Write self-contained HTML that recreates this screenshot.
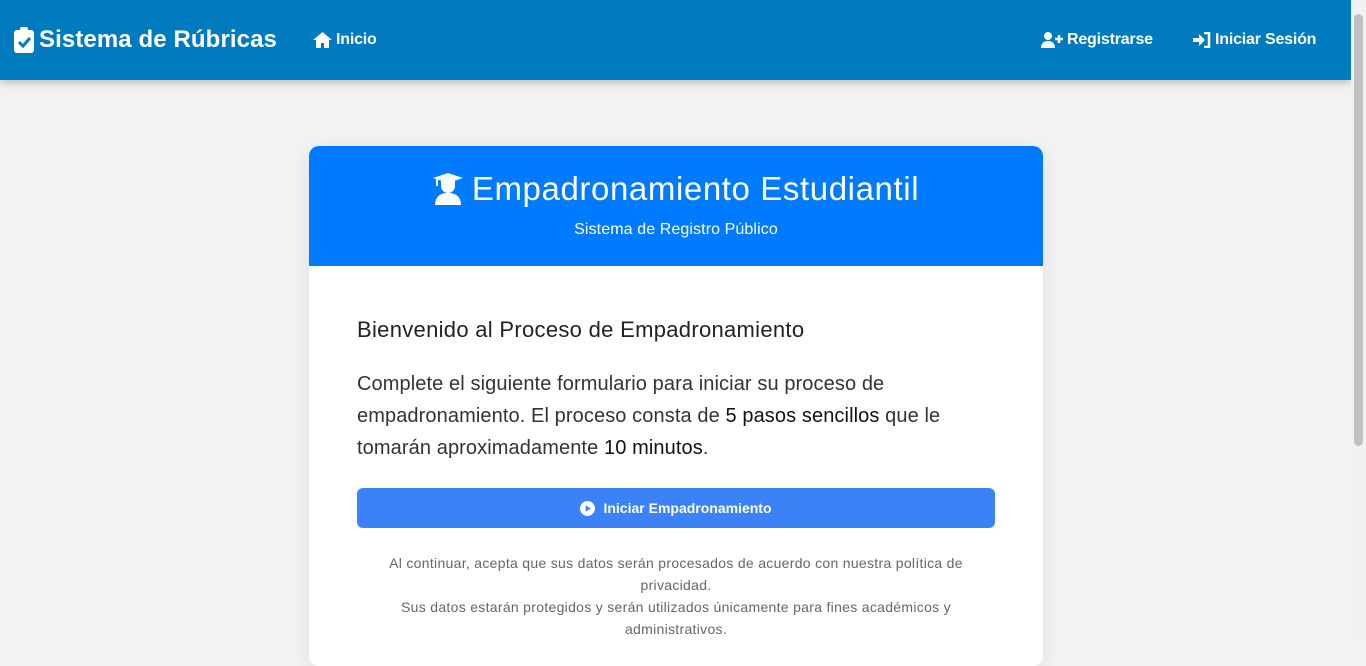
<!DOCTYPE html>
<html><head><meta charset="utf-8"><style>
*{box-sizing:border-box;margin:0;padding:0}
body{width:1366px;height:641px;overflow:hidden;background:#f2f2f3;font-family:"Liberation Sans",sans-serif;position:relative}
.nav{position:absolute;left:0;top:0;width:1351px;height:80px;background:#007bc0;box-shadow:0 2px 8px rgba(0,0,0,.25);color:#fff}
.brand{position:absolute;left:14px;top:26px;font-size:24px;font-weight:bold;display:flex;align-items:center;gap:5px;letter-spacing:0.1px}
.lnk{position:absolute;top:31px;font-size:16px;font-weight:bold;display:flex;align-items:center;gap:4px;letter-spacing:-0.2px}
.sb{position:absolute;right:0;top:0;width:15px;height:641px;background:#f1f1f1}
.sb div{position:absolute;left:3px;top:14px;width:9px;height:432px;background:#c1c1c1;border-radius:5px}
.card{position:absolute;left:309px;top:146px;width:734px;height:520px;background:#fff;border-radius:10px;overflow:hidden;box-shadow:0 4px 20px rgba(0,0,0,.08)}
.hd{height:120px;background:#007bff;color:#fff;text-align:center}
.hd h1{font-weight:normal;font-size:33px;padding-top:24px;display:flex;justify-content:center;align-items:center;gap:9px;letter-spacing:0.6px}
.hd p{font-size:16px;margin-top:13px;letter-spacing:0.1px}
.bd{padding:0 48px;color:#222}
h2{font-weight:normal;font-size:22px;margin-top:51px;letter-spacing:0.3px}
.lead{font-size:20px;line-height:32px;margin-top:25px;color:#333;letter-spacing:0.1px}
.btn{margin-top:24px;height:40px;background:#3b82f6;border-radius:6px;color:#fff;font-size:14px;font-weight:bold;display:flex;justify-content:center;align-items:center;gap:8px}
.note{text-align:center;font-size:14px;color:#666;line-height:22px;margin-top:24px;letter-spacing:0.3px}
</style></head><body>
<div class="nav">
<div class="brand"><svg width="20" height="26" viewBox="0 0 20 26"><rect x="0" y="3" width="20" height="23" rx="3" fill="#fff"/><rect x="6" y="0" width="8" height="6" rx="2" fill="#fff"/><path d="M5 15l4 4 7-8" stroke="#007bc0" stroke-width="3" fill="none"/></svg>Sistema de Rúbricas</div>
<div class="lnk" style="left:313px"><svg width="19" height="16" viewBox="0 0 19 16"><path d="M9.5 0L0 8h3v8h5v-5h3v5h5V8h3z" fill="#fff"/></svg>Inicio</div>
<div class="lnk" style="left:1041px"><svg width="22" height="16" viewBox="0 0 22 16"><circle cx="7" cy="4" r="4" fill="#fff"/><path d="M0 16c0-5 3-7 7-7s7 2 7 7z" fill="#fff"/><path d="M18 3v8M14 7h8" stroke="#fff" stroke-width="2.5"/></svg>Registrarse</div>
<div class="lnk" style="left:1193px"><svg width="18" height="16" viewBox="0 0 18 16"><path d="M0 6h6V2l6 6-6 6v-4H0z" fill="#fff"/><path d="M11 1h5v14h-5" stroke="#fff" stroke-width="2.5" fill="none"/></svg>Iniciar Sesión</div>
</div>
<div class="sb"><div></div></div>
<div class="card">
<div class="hd"><h1><svg width="30" height="32" viewBox="0 0 30 32"><path d="M15 0L0 5l15 5 15-5z" fill="#fff"/><rect x="3" y="5" width="2" height="8" fill="#fff"/><path d="M8 8v5a7 7 0 0 0 14 0V8z" fill="#fff"/><path d="M2 32c0-8 5-12 13-12s13 4 13 12z" fill="#fff"/></svg>Empadronamiento Estudiantil</h1><p>Sistema de Registro Público</p></div>
<div class="bd">
<h2>Bienvenido al Proceso de Empadronamiento</h2>
<p class="lead">Complete el siguiente formulario para iniciar su proceso de<br>empadronamiento. El proceso consta de <b style="font-weight:500;color:#111">5 pasos sencillos</b> que le<br>tomarán aproximadamente <b style="font-weight:500;color:#111">10 minutos</b>.</p>
<div class="btn"><svg width="15" height="15" viewBox="0 0 16 16"><circle cx="8" cy="8" r="8" fill="#fff"/><path d="M6 4.5v7l5.5-3.5z" fill="#3b82f6"/></svg>Iniciar Empadronamiento</div>
<p class="note">Al continuar, acepta que sus datos serán procesados de acuerdo con nuestra política de<br>privacidad.<br>Sus datos estarán protegidos y serán utilizados únicamente para fines académicos y<br>administrativos.</p>
</div></div>
</body></html>
